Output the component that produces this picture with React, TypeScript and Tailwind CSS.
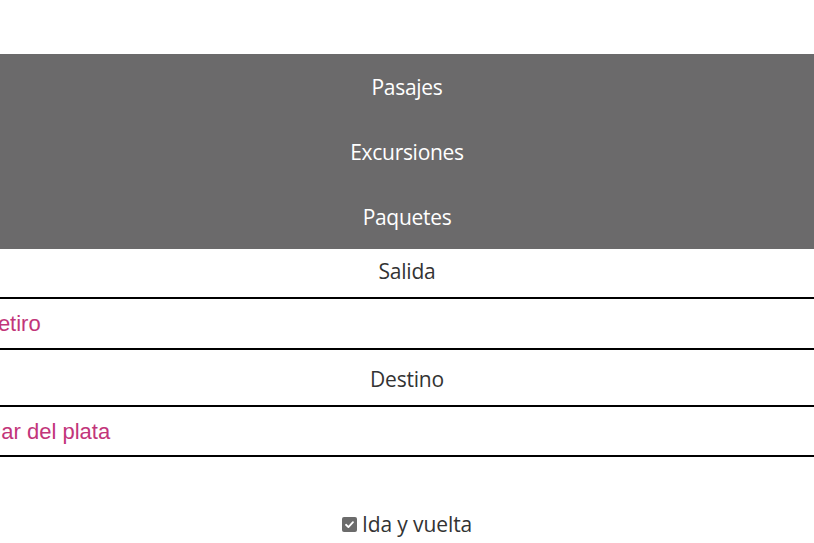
import React from "react";

const sans = { fontFamily: '"Open Sans", "Noto Sans", sans-serif' };

export default function App() {
  return (
    <div className="w-[814px] h-[543px] overflow-hidden bg-white text-[#333]" style={sans}>
      <div className="h-[54px]" />
      <nav className="bg-[#6b6a6b] text-white text-[21px] tracking-[-0.3px]">
        {["Pasajes", "Excursiones", "Paquetes"].map((t) => (
          <div key={t} className="h-[65px] flex items-center justify-center pt-[2px]">
            {t}
          </div>
        ))}
      </nav>
      <div className="h-[48px] flex items-center justify-center text-[21px] tracking-[-0.2px] pb-[2px]">Salida</div>
      <div className="h-[53px] border-y-2 border-black flex items-center overflow-hidden">
        <span
          className="ml-[-18px] text-[22px] text-[#c2357a] whitespace-nowrap"
          style={{ fontFamily: '"Liberation Sans", Arial, sans-serif' }}
        >
          Retiro
        </span>
      </div>
      <div className="h-[55px] flex items-center justify-center text-[21px] tracking-[-0.2px] pt-[4px]">Destino</div>
      <div className="h-[52px] border-y-2 border-black flex items-center overflow-hidden">
        <span
          className="ml-[-17px] text-[22px] text-[#c2357a] whitespace-nowrap"
          style={{ fontFamily: '"Liberation Sans", Arial, sans-serif' }}
        >
          Mar del plata
        </span>
      </div>
      <div className="h-[52px]" />
      <div className="flex items-center justify-center gap-[5px] text-[21px] tracking-[-0.1px]">
        <span className="w-[15px] h-[15px] rounded-[2px] bg-[#6b6b6b] flex items-center justify-center">
          <svg width="11" height="11" viewBox="0 0 12 12">
            <path d="M2.2 6.3 L4.8 8.8 L9.8 3.4" fill="none" stroke="white" strokeWidth="2" strokeLinecap="round" strokeLinejoin="round" />
          </svg>
        </span>
        <span>Ida y vuelta</span>
      </div>
    </div>
  );
}
